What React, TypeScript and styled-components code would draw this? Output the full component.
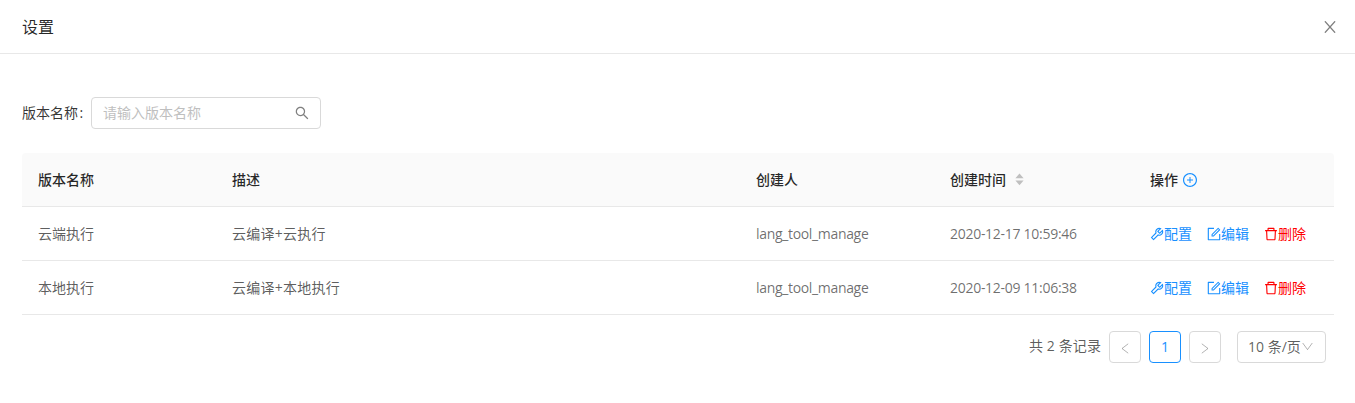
import React from 'react';
import styled, { createGlobalStyle } from 'styled-components';
import {
  AiOutlineDelete,
  AiOutlineForm,
  AiOutlinePlusCircle,
  AiOutlineSearch,
  AiOutlineTool,
} from 'react-icons/ai';

const GlobalStyle = createGlobalStyle`
  *, *::before, *::after { box-sizing: border-box; }
  body {
    margin: 0;
    background: #fff;
    color: rgba(0, 0, 0, 0.65);
    font: 14px/21px "Open Sans", "Noto Sans CJK SC", sans-serif;
  }
  svg { display: block; flex: none; }
`;

const Panel = styled.div`
  height: 403px;
  overflow: hidden;
`;

const Header = styled.header`
  display: flex;
  align-items: center;
  justify-content: space-between;
  height: 54px;
  padding: 0 19px 0 22px;
  border-bottom: 1px solid #e8e8e8;
`;

const Title = styled.h1`
  margin: 0;
  font-size: 16px;
  line-height: 22px;
  font-weight: 400;
  color: rgba(0, 0, 0, 0.85);
`;

const IconButton = styled.button`
  display: flex;
  padding: 0;
  border: 0;
  background: none;
  color: rgba(0, 0, 0, 0.5);
`;

const LineIcon = styled.svg`
  fill: none;
  stroke: currentColor;
`;

const Content = styled.main`
  padding: 43px 21px 0 22px;
`;

const SearchRow = styled.div`
  display: flex;
  align-items: center;
  height: 32px;
  margin-bottom: 24px;
`;

const Label = styled.label`
  width: 69px;
  padding-bottom: 2px;
  white-space: nowrap;
  color: rgba(0, 0, 0, 0.8);
`;

const Colon = styled.span`
  margin-left: 1.5px;
`;

const SearchBox = styled.div`
  display: flex;
  align-items: center;
  width: 230px;
  height: 32px;
  padding: 0 10px 0 11px;
  border: 1px solid #d9d9d9;
  border-radius: 4px;
  color: rgba(0, 0, 0, 0.5);
`;

const SearchInput = styled.input`
  flex: 1;
  min-width: 0;
  padding: 0 0 2px;
  border: 0;
  outline: 0;
  font: inherit;
  &::placeholder { color: #bfbfbf; opacity: 1; }
`;

const Row = styled.div<{ $head?: boolean }>`
  display: grid;
  grid-template-columns: 194px 524px 194px 200px 200px;
  align-items: center;
  height: 54px;
  border-bottom: 1px solid #e8e8e8;
  border-radius: ${(p) => (p.$head ? '4px 4px 0 0' : '0')};
  background: ${(p) => (p.$head ? '#fafafa' : '#fff')};
  color: ${(p) => (p.$head ? 'rgba(0, 0, 0, 0.85)' : 'inherit')};
  font-weight: ${(p) => (p.$head ? 500 : 400)};
`;

const Cell = styled.div<{ $spacing?: number }>`
  display: flex;
  align-items: center;
  padding-left: 16px;
  white-space: nowrap;
  letter-spacing: ${(p) => p.$spacing ?? 0}px;
`;

const LatinCell = styled(Cell)`
  color: rgba(0, 0, 0, 0.58);
`;

const Sorter = styled.svg`
  margin-left: 9px;
  fill: #bfbfbf;
`;

const AddButton = styled(IconButton)`
  margin-left: 4px;
  color: #1890ff;
`;

const Action = styled.a<{ $danger?: boolean }>`
  display: flex;
  align-items: center;
  margin-right: 15px;
  color: ${(p) => (p.$danger ? '#f00' : '#1890ff')};
  svg { margin: 0 -1px; }
`;

const Pagination = styled.nav`
  display: flex;
  align-items: center;
  justify-content: flex-end;
  gap: 8px;
  padding: 16px 8px 0 0;
`;

const Total = styled.span`
  height: 22px;
  line-height: 20px;
  letter-spacing: 0.1px;
`;

const PageButton = styled.button<{ $active?: boolean }>`
  display: flex;
  align-items: center;
  justify-content: center;
  width: 32px;
  height: 32px;
  padding: ${(p) => (p.$active ? '0 0 2px' : '2px 0 0')};
  border: 1px solid ${(p) => (p.$active ? '#1890ff' : '#d9d9d9')};
  border-radius: 4px;
  background: #fff;
  color: ${(p) => (p.$active ? '#1890ff' : 'rgba(0, 0, 0, 0.3)')};
  font: 500 14px "Open Sans", sans-serif;
`;

const SizeSelect = styled.div`
  display: flex;
  align-items: center;
  width: 89px;
  height: 32px;
  margin-left: 8px;
  padding: 0 0 2px 10px;
  border: 1px solid #d9d9d9;
  border-radius: 4px;
  white-space: nowrap;
  svg { margin-left: 1px; color: rgba(0, 0, 0, 0.3); }
`;

const versions = [
  { name: '云端执行', desc: '云编译+云执行', owner: 'lang_tool_manage', time: '2020-12-17 10:59:46' },
  { name: '本地执行', desc: '云编译+本地执行', owner: 'lang_tool_manage', time: '2020-12-09 11:06:38' },
];

export default function App() {
  return (
    <Panel>
      <GlobalStyle />
      <Header>
        <Title>设置</Title>
        <IconButton aria-label="关闭">
          <LineIcon width="12" height="12" viewBox="0 0 12 12" strokeWidth="1.3">
            <path d="M.9 .3 11.1 11.7M11.1 .3 .9 11.7" />
          </LineIcon>
        </IconButton>
      </Header>
      <Content>
        <SearchRow>
          <Label htmlFor="version">版本名称<Colon>:</Colon></Label>
          <SearchBox>
            <SearchInput id="version" placeholder="请输入版本名称" />
            <AiOutlineSearch size={16} />
          </SearchBox>
        </SearchRow>
        <Row $head>
          <Cell>版本名称</Cell>
          <Cell>描述</Cell>
          <Cell>创建人</Cell>
          <Cell>
            创建时间
            <Sorter width="9" height="13" viewBox="0 0 9 13">
              <path d="M4.5 0.5 8.6 5.2H0.4zM4.5 12.2 0.4 7.5H8.6z" />
            </Sorter>
          </Cell>
          <Cell>
            操作
            <AddButton aria-label="新增"><AiOutlinePlusCircle size={16} /></AddButton>
          </Cell>
        </Row>
        {versions.map((v) => (
          <Row key={v.name}>
            <Cell>{v.name}</Cell>
            <Cell $spacing={0.25}>{v.desc}</Cell>
            <LatinCell $spacing={-0.33}>{v.owner}</LatinCell>
            <LatinCell $spacing={-0.28}>{v.time}</LatinCell>
            <Cell>
              <Action><AiOutlineTool size={16} />配置</Action>
              <Action><AiOutlineForm size={16} />编辑</Action>
              <Action $danger><AiOutlineDelete size={16} />删除</Action>
            </Cell>
          </Row>
        ))}
        <Pagination>
          <Total>共 2 条记录</Total>
          <PageButton aria-label="上一页">
            <LineIcon width="8" height="11" viewBox="0 0 8 11">
              <path d="M7.2 .8 1 5.5 7.2 10.2" />
            </LineIcon>
          </PageButton>
          <PageButton $active>1</PageButton>
          <PageButton aria-label="下一页">
            <LineIcon width="8" height="11" viewBox="0 0 8 11">
              <path d="M.8 .8 7 5.5 .8 10.2" />
            </LineIcon>
          </PageButton>
          <SizeSelect>
            10 条/页
            <LineIcon width="11" height="9" viewBox="0 0 11 9">
              <path d="M.7 1 5.5 7.6 10.3 1" />
            </LineIcon>
          </SizeSelect>
        </Pagination>
      </Content>
    </Panel>
  );
}
